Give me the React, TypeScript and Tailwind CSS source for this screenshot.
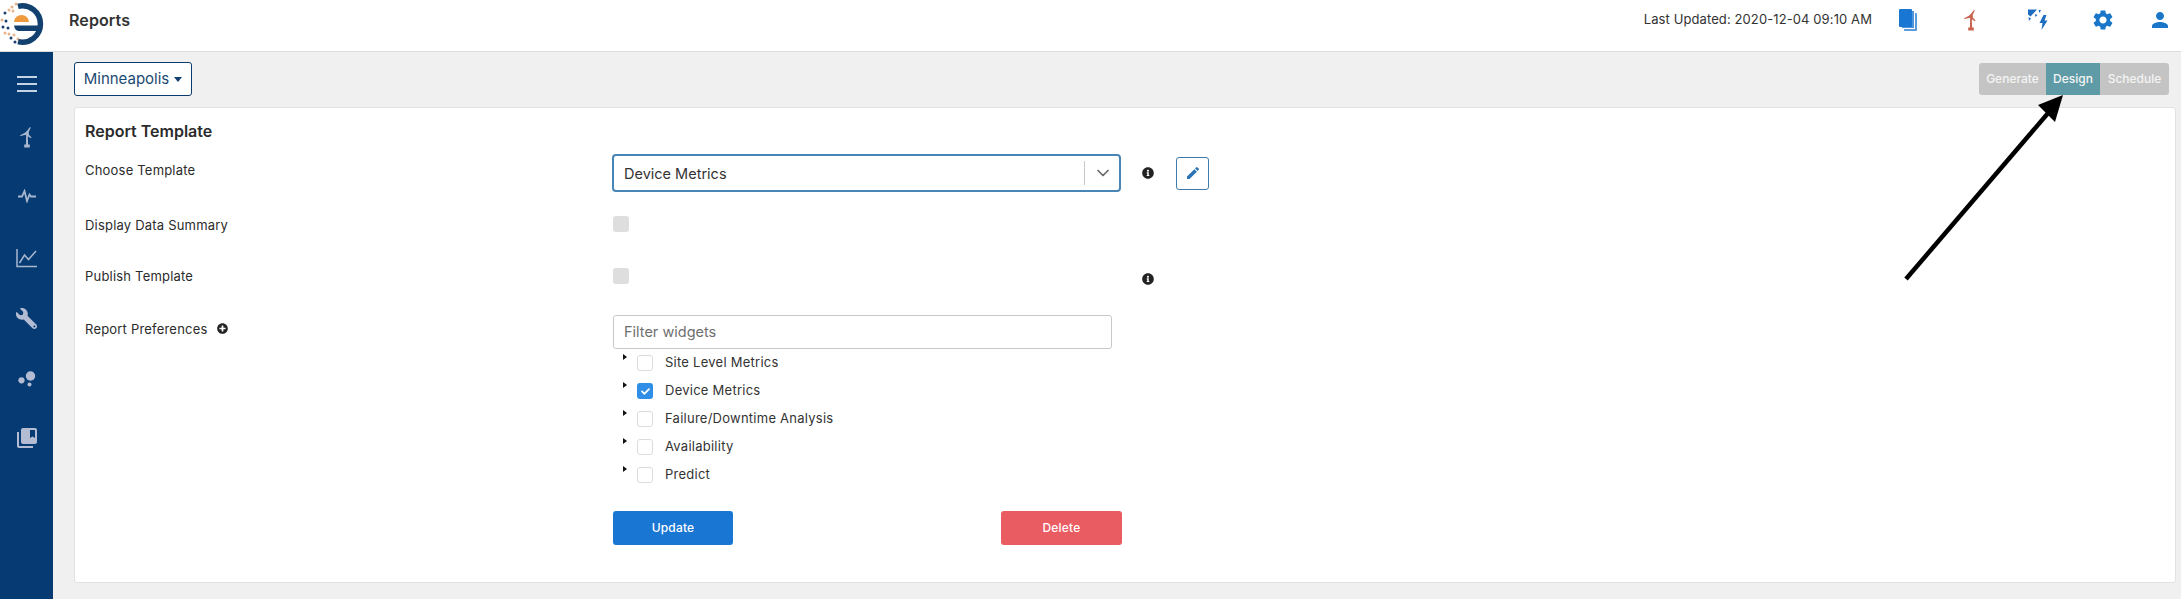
import { FaCheck, FaInfoCircle, FaPlusCircle, FaWrench } from "react-icons/fa";
import { MdCollectionsBookmark, MdEdit, MdPerson, MdSettings } from "react-icons/md";
import { LuChevronDown } from "react-icons/lu";

const widgets = [
  { name: "Site Level Metrics", checked: false },
  { name: "Device Metrics", checked: true },
  { name: "Failure/Downtime Analysis", checked: false },
  { name: "Availability", checked: false },
  { name: "Predict", checked: false },
];

function Logo() {
  const dots = [
    [16, 4, "#e9b48a"], [12, 7, "#e9b48a"], [9, 10, "#e9b48a"], [5, 13, "#1d3f6e"], [13, 11, "#e9b48a"],
    [2, 20, "#e9b48a"], [6, 21, "#1d3f6e"], [3, 27, "#1d3f6e"], [8, 28, "#1d3f6e"], [5, 33, "#e9b48a"],
    [9, 34, "#e9b48a"], [11, 38, "#1d3f6e"], [14, 35, "#e9b48a"], [15, 42, "#1d3f6e"], [18, 39, "#e9b48a"],
  ] as const;
  return (
    <svg width="44" height="48" viewBox="0 0 44 48" className="translate-y-[4px]">
      {dots.map(([x, y, c], i) => (
        <circle key={i} cx={x} cy={y} r="1.5" fill={c} />
      ))}
      <path d="M18 6.3 A18.2 18.2 0 1 1 18 41.7" fill="none" stroke="#12406f" strokeWidth="5.5" />
      <path d="M14 22 A7.5 7 0 0 1 29 22 Z" fill="#ef9a3d" />
      <path d="M14 25.5 H38 V31 H19 Q15 31 14 25.5 Z" fill="#12406f" />
    </svg>
  );
}

function Turbine({ color }: { color: string }) {
  return (
    <svg width="14" height="21" viewBox="0 0 14 21" fill={color}>
      <path d="M6.2 7 L5.9 18 H8.1 L7.8 7 Z" />
      <path d="M4.2 17.5 H9.8 V20.5 H4.2 Z" />
      <path d="M6 5 L10 0 L10.8 0.5 L8 6.5 Z" />
      <path d="M7.5 6 L11.5 10.5 L10.8 11.2 L6 8 Z" />
      <path d="M7 4.8 L0 8.2 L0.3 9 L7.5 7.5 Z" />
      <circle cx="7" cy="6.3" r="1.8" />
    </svg>
  );
}

function Pulse() {
  return (
    <svg width="20" height="14" viewBox="0 0 20 14" fill="none" stroke="#a9b6d0" strokeWidth="1.8">
      <path d="M1 7.5 H5 L7.5 2 L10 12 L12.5 5.5 L14 7.5 H19" />
    </svg>
  );
}

function ChartIcon() {
  return (
    <svg width="22" height="20" viewBox="0 0 22 20" fill="none" stroke="#a9b6d0" strokeWidth="1.5">
      <path d="M1 1 V18.5 H21" />
      <path d="M3.5 15 L8.5 7 L12.5 11.5 L20 3" />
    </svg>
  );
}

function Bubbles() {
  return (
    <svg width="18" height="16" viewBox="0 0 18 16" fill="#b3bcd3">
      <circle cx="12.5" cy="5" r="4.7" />
      <circle cx="3.5" cy="9.3" r="3.1" />
      <circle cx="11.5" cy="13.5" r="2" />
    </svg>
  );
}

function Outage() {
  return (
    <svg width="20" height="22" viewBox="0 0 20 22" fill="#1d6ec0">
      <path d="M0 0.5 H9 L2.5 7.5 L0 5.5 Z" />
      <path d="M10.5 1 L13 1 L11.5 4 Z M0.5 8 L3 9.5 L1 12 Z M7 5 L9.5 6 L7.5 8 Z" />
      <path d="M15.5 6 L11.5 14 H14.5 L13.5 21 L19.5 11.5 H16.5 L18.5 6 Z" />
    </svg>
  );
}

function Arrow() {
  return (
    <svg className="absolute left-[1900px] top-[90px]" width="175" height="195" viewBox="0 0 175 195">
      <path d="M6 189 L149 22" stroke="#000" strokeWidth="4.5" fill="none" />
      <path d="M163 5 L138 15 L155 32 Z" fill="#000" />
    </svg>
  );
}

export default function App() {
  return (
    <div className="relative h-[599px] w-[2181px] overflow-hidden bg-[#f0f0f0] font-['Inter',sans-serif] text-[#2b2b2b]">
      {/* Top bar */}
      <header className="flex h-[52px] items-center border-b border-[#dcdcdc] bg-white pb-[11px]">
        <div className="flex w-[69px] items-center">
          <Logo />
        </div>
        <h1 className="text-[16px] font-semibold tracking-[0.1px] text-[#333]">Reports</h1>
        <span className="ml-auto text-[13px] tracking-[0.1px] text-[#333]">Last Updated: 2020-12-04 09:10 AM</span>
        <div className="relative ml-[27px] h-[22px] w-[18px]">
          <div className="absolute bottom-0 right-0 h-[18px] w-[13px] rounded-[1px] bg-[#5b9bdc]" />
          <div className="absolute bottom-[2px] right-[2px] h-[18px] w-[13px] rounded-[1px] border-b border-r border-white bg-[#4f93d8]" />
          <div className="absolute left-0 top-0 h-[18px] w-[13px] rounded-[1px] bg-[#1976d2]" />
        </div>
        <div className="ml-[47px] w-[18px]">
          <Turbine color="#c9634f" />
        </div>
        <div className="ml-[46px]">
          <Outage />
        </div>
        <MdSettings className="ml-[43px] text-[#1976c9]" size={24} />
        <MdPerson className="ml-[33px] text-[#1976c9]" size={24} />
        <div className="w-[9px]" />
      </header>

      <div className="flex h-[547px]">
        {/* Sidebar */}
        <aside className="flex w-[53px] shrink-0 flex-col items-center bg-[#053b72] pt-[24px]">
          <div className="flex h-[16px] w-[20px] flex-col justify-between">
            <div className="h-[2px] bg-[#c3d2e4]" />
            <div className="h-[2px] bg-[#c3d2e4]" />
            <div className="h-[2px] bg-[#c3d2e4]" />
          </div>
          <div className="mt-[35px] flex flex-col items-center">
            <div className="flex h-[61px] items-start justify-center">
              <Turbine color="#a9b6d0" />
            </div>
            <div className="flex h-[60px] items-start justify-center pt-[1px]">
              <Pulse />
            </div>
            <div className="flex h-[60px] items-start justify-center">
              <ChartIcon />
            </div>
            <div className="flex h-[60px] items-start justify-center">
              <FaWrench className="-scale-x-100 text-[#b3bcd3]" size={21} />
            </div>
            <div className="flex h-[58px] items-start justify-center pt-[3px]">
              <Bubbles />
            </div>
            <MdCollectionsBookmark className="text-[#b3bcd3]" size={24} />
          </div>
        </aside>

        <main className="min-w-0 flex-1 pl-[21px] pr-[5px] pt-[10px]">
          <div className="flex h-[34px] items-center justify-between pr-[7px]">
            <button className="flex h-[34px] w-[118px] items-center justify-center gap-[5px] rounded-[3px] border border-[#0b3c6b] bg-white text-[15px] text-[#1b4a72]">
              Minneapolis
              <span className="h-0 w-0 border-x-[4.5px] border-t-[5px] border-x-transparent border-t-[#12406f]" />
            </button>
            <div className="flex h-[32px] w-[190px] overflow-hidden rounded-[3px] bg-[#c4c4c4] text-[12px] font-medium text-[#f4f4f4]">
              <span className="flex w-[67px] items-center justify-center">Generate</span>
              <span className="flex w-[54px] items-center justify-center bg-[#5f9ba6]">Design</span>
              <span className="flex w-[69px] items-center justify-center">Schedule</span>
            </div>
          </div>

          {/* Report card */}
          <section className="mt-[11px] h-[476px] rounded-[3px] border border-[#e2e2e2] bg-white pl-[10px] pt-[13px]">
            <h2 className="h-[20px] text-[16px] leading-[20px] font-semibold text-[#2b2b2b]">Report Template</h2>

            <div className="mt-[13px] grid h-[38px] grid-cols-[527px_1fr] text-[13px] tracking-[0.2px]">
              <span className="pt-[7px]">Choose Template</span>
              <div className="flex items-center">
                <div className="flex h-[38px] w-[509px] items-center rounded-[4px] border-2 border-[#4a86b5] bg-white pl-[10px] pr-[6px]">
                  <span className="flex-1 pt-[1px] text-[14.5px] tracking-normal text-[#333]">Device Metrics</span>
                  <div className="h-[24px] w-px bg-[#c8c8c8]" />
                  <LuChevronDown className="ml-[8px] text-[#666]" size={20} />
                </div>
                <FaInfoCircle className="ml-[21px] text-[#222]" size={12} />
                <button className="ml-[22px] flex h-[33px] w-[33px] items-center justify-center rounded-[3px] border border-[#3f7aa8] bg-white">
                  <MdEdit className="text-[#2a73b4]" size={16} />
                </button>
              </div>
            </div>

            <div className="mt-[24px] grid h-[16px] grid-cols-[527px_1fr] text-[13px] tracking-[0.2px]">
              <span>Display Data Summary</span>
              <div className="pl-[1px]">
                <div className="h-[16px] w-[16px] rounded-[3px] bg-[#dedede]" />
              </div>
            </div>

            <div className="mt-[36px] grid h-[16px] grid-cols-[527px_1fr] text-[13px] tracking-[0.2px]">
              <span className="-mt-[1px]">Publish Template</span>
              <div className="flex items-start pl-[1px]">
                <div className="h-[16px] w-[16px] rounded-[3px] bg-[#dedede]" />
                <FaInfoCircle className="ml-[513px] mt-[5px] text-[#222]" size={12} />
              </div>
            </div>

            <div className="mt-[31px] grid grid-cols-[527px_1fr] text-[13px] tracking-[0.2px]">
              <span className="flex items-start gap-[9px] pt-[5px]">
                Report Preferences
                <FaPlusCircle className="mt-[3px] text-[#222]" size={11} />
              </span>
              <div className="pl-[1px]">
                <div className="flex h-[34px] w-[499px] items-center rounded-[3px] border border-[#c9c9c9] pl-[10px] text-[14.5px] tracking-normal text-[#6f6f6f]">
                  Filter widgets
                </div>
                <div className="mt-[6px] flex flex-col gap-[12px]">
                  {widgets.map((w) => (
                    <div key={w.name} className="flex h-[16px] items-center pl-[10px]">
                      <span className="mb-[13px] h-0 w-0 border-y-[3.5px] border-l-[4px] border-y-transparent border-l-[#111]" />
                      <span
                        className={
                          w.checked
                            ? "ml-[10px] flex h-[16px] w-[16px] items-center justify-center rounded-[3px] bg-[#2f8ee6]"
                            : "ml-[10px] h-[16px] w-[16px] rounded-[3px] border border-[#dcdcdc] bg-white"
                        }
                      >
                        {w.checked && <FaCheck className="text-white" size={9} />}
                      </span>
                      <span className="ml-[12px] text-[13px] tracking-[0.25px] text-[#333]">{w.name}</span>
                    </div>
                  ))}
                </div>
                <div className="mt-[28px] flex w-[509px] justify-between">
                  <button className="h-[34px] w-[120px] rounded-[3px] bg-[#1976d2] text-[12px] font-medium text-white">Update</button>
                  <button className="h-[34px] w-[121px] rounded-[3px] bg-[#e95c62] text-[12px] font-medium text-white">Delete</button>
                </div>
              </div>
            </div>
          </section>
        </main>
      </div>
      <Arrow />
    </div>
  );
}
